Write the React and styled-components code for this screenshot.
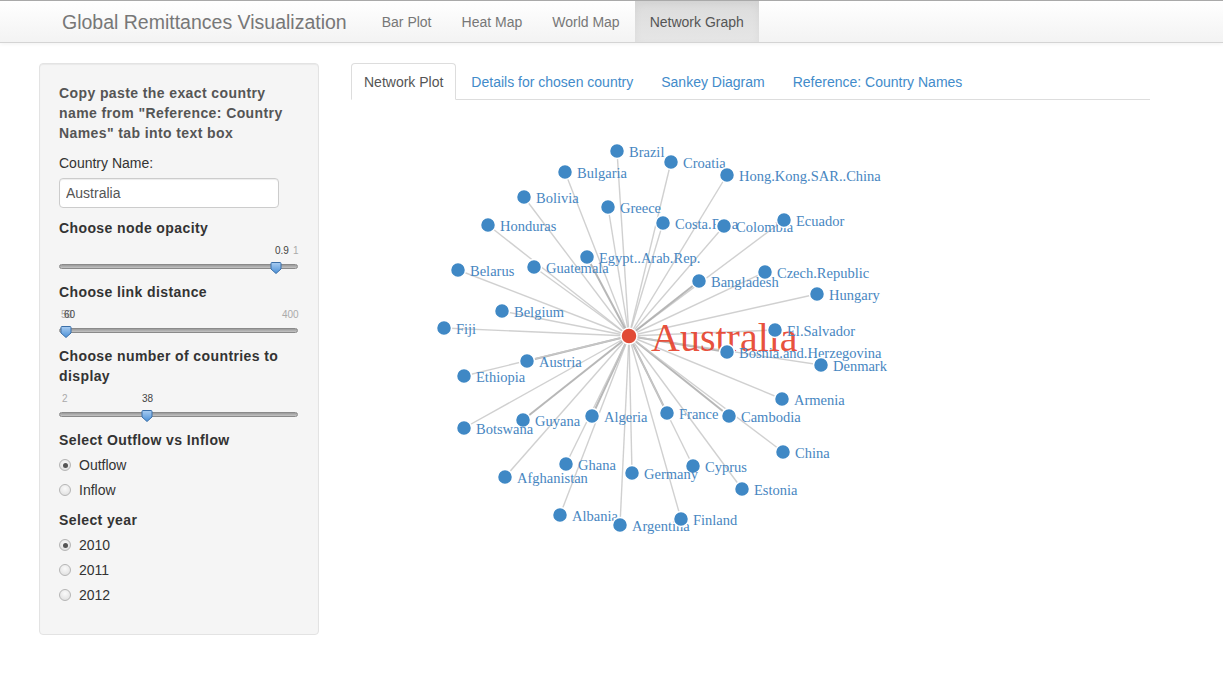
import React from 'react';
import styled, { createGlobalStyle } from 'styled-components';

const GlobalStyle = createGlobalStyle`
  html, body {
    margin: 0;
    padding: 0;
    background: #fff;
    font-family: "Liberation Sans", Arial, Helvetica, sans-serif;
    font-size: 14px;
    line-height: 20px;
    color: #333;
  }
  * { box-sizing: border-box; }
`;

const Navbar = styled.div`
  display: flex;
  align-items: stretch;
  height: 43px;
  border-top: 1px solid #a9a9a9;
  border-bottom: 1px solid #d4d4d4;
  background: linear-gradient(to bottom, #ffffff 0%, #f3f3f3 100%);
  box-shadow: 0 1px 4px rgba(0, 0, 0, 0.06);
  padding-left: 47px;
`;

const Brand = styled.a`
  display: flex;
  align-items: center;
  padding: 0 15px;
  margin-right: 5px;
  font-size: 19.5px;
  color: #777;
  text-decoration: none;
`;

const NavItem = styled.a`
  display: flex;
  align-items: center;
  padding: 0 15px;
  text-decoration: none;
  background: ${p => (p.active ? 'linear-gradient(to bottom, #dcdcdc 0%, #e6e6e6 100%)' : 'transparent')};
  box-shadow: ${p => (p.active ? 'inset 0 3px 9px rgba(0,0,0,0.05)' : 'none')};
  color: ${p => (p.active ? '#555' : '#777')};
`;

const Page = styled.div`
  display: flex;
  align-items: flex-start;
  padding: 20px 0 0 39px;
  gap: 32px;
`;

const Well = styled.div`
  width: 280px;
  padding: 19px 19px 29px;
  background: #f5f5f5;
  border: 1px solid #e3e3e3;
  border-radius: 4px;
  box-shadow: inset 0 1px 1px rgba(0, 0, 0, 0.05);
  display: flex;
  flex-direction: column;
`;

const Intro = styled.div`
  font-weight: bold;
  color: #555;
  letter-spacing: 0.4px;
  margin-bottom: 10px;
`;

const FieldLabel = styled.div`
  margin-bottom: 5px;
  color: #333;
`;

const TextInput = styled.input`
  width: 220px;
  height: 30px;
  padding: 5px 6px;
  font-family: inherit;
  font-size: 14px;
  color: #555;
  border: 1px solid #ccc;
  border-radius: 4px;
  background: #fff;
  box-shadow: inset 0 1px 1px rgba(0, 0, 0, 0.075);
  margin-bottom: 10px;
  outline: none;
`;

const Heading = styled.div`
  font-weight: bold;
  color: #333;
  letter-spacing: 0.4px;
`;

const SliderBox = styled.div`
  position: relative;
  height: 44px;
  width: 240px;
`;

const Track = styled.div`
  position: absolute;
  left: 0;
  right: 1px;
  top: 26px;
  height: 5px;
  border-radius: 3px;
  border: 1px solid #8a8a8a;
  background: linear-gradient(to bottom, #9a9a9a 0%, #c4c4c4 100%);
`;

const TickLabel = styled.span`
  position: absolute;
  top: 6px;
  font-size: 10px;
  line-height: 14px;
  color: ${p => (p.$value ? '#444' : '#aaa')};
`;

const Handle = styled.svg`
  position: absolute;
  top: 24px;
  width: 12px;
  height: 12px;
`;

const RadioGroup = styled.div`
  display: flex;
  flex-direction: column;
  gap: 5px;
  margin-top: 5px;
  margin-bottom: ${p => p.$bottom || 0}px;
`;

const RadioRow = styled.label`
  display: flex;
  align-items: center;
  height: 20px;
  gap: 8px;
  color: #333;
`;

const RadioDot = styled.span`
  width: 12px;
  height: 12px;
  border-radius: 50%;
  border: 1px solid #b5b5b5;
  background: radial-gradient(circle at 50% 35%, #fafafa 0%, #dcdcdc 100%);
  display: flex;
  align-items: center;
  justify-content: center;
  &::after {
    content: '';
    width: 5px;
    height: 5px;
    border-radius: 50%;
    background: ${p => (p.$checked ? '#555' : 'transparent')};
  }
`;

const Main = styled.div`
  width: 799px;
  display: flex;
  flex-direction: column;
`;

const Tabs = styled.div`
  display: flex;
  border-bottom: 1px solid #ddd;
  height: 37px;
`;

const Tab = styled.a`
  display: block;
  padding: 8px 12px 6px;
  margin-right: 2px;
  height: 37px;
  border: 1px solid ${p => (p.active ? '#ddd' : 'transparent')};
  border-bottom-color: ${p => (p.active ? '#fff' : 'transparent')};
  border-radius: 4px 4px 0 0;
  background: ${p => (p.active ? '#fff' : 'transparent')};
  color: ${p => (p.active ? '#555' : '#428bca')};
  text-decoration: none;
  white-space: nowrap;
`;

const Graph = styled.svg`
  display: block;
  width: 799px;
  height: 460px;
`;

const Slider = ({ handle, labels }) => (
  <SliderBox>
    {labels.map(l => (
      <TickLabel key={l.text + l.x} $value={l.value} style={{ left: l.x }}>
        {l.text}
      </TickLabel>
    ))}
    <Track />
    <Handle viewBox="0 0 12 12" style={{ left: handle - 6 }}>
      <defs>
        <linearGradient id="hg" x1="0" y1="0" x2="0" y2="1">
          <stop offset="0" stopColor="#a9cdf2" />
          <stop offset="1" stopColor="#4a8fd6" />
        </linearGradient>
      </defs>
      <path d="M1 1.5 Q1 0.5 2 0.5 H10 Q11 0.5 11 1.5 V7 L6 11.5 L1 7 Z" fill="url(#hg)" stroke="#3b6fa8" strokeWidth="1" />
    </Handle>
  </SliderBox>
);

const center = { x: 629, y: 337 };

const nodes = [
  ['Brazil', 617, 152], ['Croatia', 671, 163], ['Hong.Kong.SAR..China', 727, 176],
  ['Bulgaria', 565, 173], ['Bolivia', 524, 198], ['Greece', 608, 208],
  ['Costa.Rica', 663, 224], ['Colombia', 724, 227], ['Ecuador', 784, 221],
  ['Honduras', 488, 226], ['Egypt..Arab.Rep.', 587, 258], ['Guatemala', 534, 268],
  ['Belarus', 458, 271], ['Bangladesh', 699, 282], ['Czech.Republic', 765, 273],
  ['Hungary', 817, 295], ['Belgium', 502, 312], ['Fiji', 444, 329],
  ['El.Salvador', 775, 331], ['Bosnia.and.Herzegovina', 727, 353], ['Denmark', 821, 366],
  ['Austria', 527, 362], ['Ethiopia', 464, 377], ['Armenia', 782, 400],
  ['Guyana', 523, 421], ['Algeria', 592, 417], ['France', 667, 414],
  ['Cambodia', 729, 417], ['Botswana', 464, 429], ['China', 783, 453],
  ['Ghana', 566, 465], ['Cyprus', 693, 467], ['Germany', 632, 474],
  ['Afghanistan', 505, 478], ['Estonia', 742, 490], ['Albania', 560, 516],
  ['Argentina', 620, 526], ['Finland', 681, 520],
];

const heavy = ['Austria', 'Bangladesh', 'France', 'Guyana', 'Algeria', 'Egypt..Arab.Rep.', 'Bosnia.and.Herzegovina', 'Cambodia'];

const NetworkGraph = () => (
  <Graph viewBox="351 101 799 460">
    <g>
      {nodes.map(([name, x, y]) => (
        <line
          key={'l' + name}
          x1={center.x}
          y1={center.y}
          x2={x}
          y2={y}
          stroke={heavy.includes(name) ? '#aaa' : '#c8c8c8'}
          strokeWidth={heavy.includes(name) ? 2 : 1.4}
          strokeOpacity="0.85"
        />
      ))}
    </g>
    <g>
      <circle cx={center.x} cy={center.y} r="8" fill="#e14b36" stroke="#fff" strokeWidth="1.5" />
      <text x="651" y="352" fontFamily="'Liberation Serif', 'Times New Roman', serif" fontSize="40" fill="#e6412b" fillOpacity="0.92">
        Australia
      </text>
    </g>
    {nodes.map(([name, x, y]) => (
      <g key={name}>
        <circle cx={x} cy={y} r="7.5" fill="#3f88c5" stroke="#fff" strokeWidth="1.5" />
        <text x={x + 12} y={y + 6} fontFamily="'Liberation Serif', 'Times New Roman', serif" fontSize="14.5" fill="#4786c1">
          {name}
        </text>
      </g>
    ))}
  </Graph>
);

export default function App() {
  return (
    <>
      <GlobalStyle />
      <Navbar>
        <Brand>Global Remittances Visualization</Brand>
        <NavItem>Bar Plot</NavItem>
        <NavItem>Heat Map</NavItem>
        <NavItem>World Map</NavItem>
        <NavItem active>Network Graph</NavItem>
      </Navbar>
      <Page>
        <Well>
          <Intro>
            Copy paste the exact country name from "Reference: Country Names" tab into text box
          </Intro>
          <FieldLabel>Country Name:</FieldLabel>
          <TextInput defaultValue="Australia" />
          <Heading>Choose node opacity</Heading>
          <Slider
            handle={217}
            labels={[
              { text: '0.9', x: 216, value: true },
              { text: '1', x: 234 },
            ]}
          />
          <Heading>Choose link distance</Heading>
          <Slider
            handle={7}
            labels={[
              { text: '50', x: 2 },
              { text: '60', x: 5, value: true },
              { text: '400', x: 223 },
            ]}
          />
          <Heading>Choose number of countries to display</Heading>
          <Slider
            handle={88}
            labels={[
              { text: '2', x: 3 },
              { text: '38', x: 83, value: true },
            ]}
          />
          <Heading>Select Outflow vs Inflow</Heading>
          <RadioGroup $bottom={10}>
            <RadioRow><RadioDot $checked />Outflow</RadioRow>
            <RadioRow><RadioDot />Inflow</RadioRow>
          </RadioGroup>
          <Heading>Select year</Heading>
          <RadioGroup>
            <RadioRow><RadioDot $checked />2010</RadioRow>
            <RadioRow><RadioDot />2011</RadioRow>
            <RadioRow><RadioDot />2012</RadioRow>
          </RadioGroup>
        </Well>
        <Main>
          <Tabs>
            <Tab active>Network Plot</Tab>
            <Tab>Details for chosen country</Tab>
            <Tab>Sankey Diagram</Tab>
            <Tab>Reference: Country Names</Tab>
          </Tabs>
          <NetworkGraph />
        </Main>
      </Page>
    </>
  );
}
